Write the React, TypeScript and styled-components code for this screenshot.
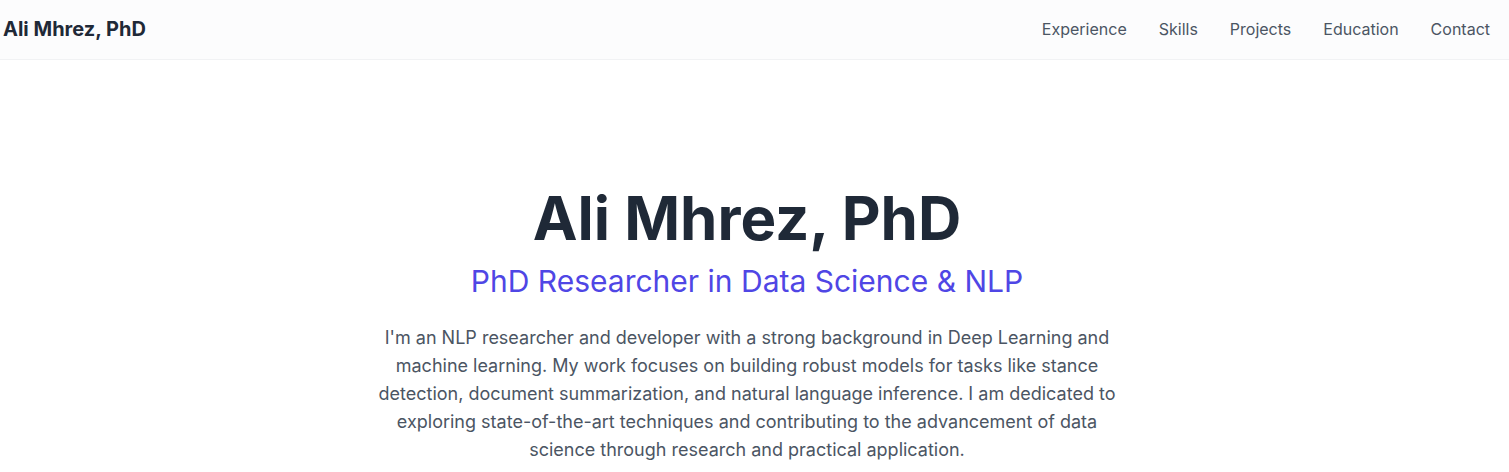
import React from "react";
import styled, { createGlobalStyle } from "styled-components";

const Global = createGlobalStyle`
  html, body { margin: 0; padding: 0; background: #ffffff; }
  body { font-family: Inter, "Noto Sans", sans-serif; -webkit-font-smoothing: antialiased; }
  * { box-sizing: border-box; }
`;

const Page = styled.div`
  width: 100%;
  min-height: 472px;
`;

const Header = styled.header`
  height: 60px;
  display: flex;
  align-items: center;
  justify-content: space-between;
  padding: 0 19px 1px 3px;
  background: #fcfcfd;
  border-bottom: 1px solid #f1f2f4;
`;

const Logo = styled.a`
  font-size: 20px;
  font-weight: 700;
  color: #1f2937;
  text-decoration: none;
`;

const Nav = styled.nav`
  display: flex;
  gap: 32px;
`;

const NavLink = styled.a`
  font-size: 16px;
  color: #4b5563;
  text-decoration: none;
`;

const Hero = styled.section`
  display: flex;
  flex-direction: column;
  align-items: center;
  text-align: center;
  padding: 128px 15px 0 0;
`;

const Title = styled.h1`
  margin: 0 0 15px;
  font-size: 60px;
  line-height: 1;
  font-weight: 700;
  color: #1f2937;
`;

const Subtitle = styled.h2`
  margin: 0 0 25px;
  font-size: 30px;
  line-height: 36px;
  font-weight: 400;
  color: #4f46e5;
`;

const Intro = styled.p`
  margin: 0;
  max-width: 768px;
  font-size: 18px;
  line-height: 28px;
  color: #4b5563;
`;

const links = ["Experience", "Skills", "Projects", "Education", "Contact"];

export default function App() {
  return (
    <Page>
      <Global />
      <Header>
        <Logo href="#">Ali Mhrez, PhD</Logo>
        <Nav>
          {links.map((l) => (
            <NavLink key={l} href={`#${l.toLowerCase()}`}>{l}</NavLink>
          ))}
        </Nav>
      </Header>
      <Hero>
        <Title>Ali Mhrez, PhD</Title>
        <Subtitle>PhD Researcher in Data Science &amp; NLP</Subtitle>
        <Intro>
          I'm an NLP researcher and developer with a strong background in Deep Learning and
          machine learning. My work focuses on building robust models for tasks like stance
          detection, document summarization, and natural language inference. I am dedicated to
          exploring state-of-the-art techniques and contributing to the advancement of data
          science through research and practical application.
        </Intro>
      </Hero>
    </Page>
  );
}
